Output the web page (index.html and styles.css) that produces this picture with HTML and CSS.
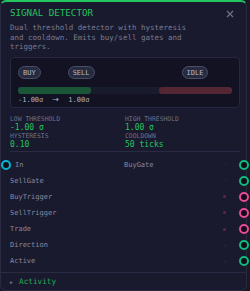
FILE: index.html
```html
<!DOCTYPE html>
<html>
<head>
<meta charset="utf-8">
<link rel="stylesheet" href="styles.css">
</head>
<body>
<div class="node">
  <div class="header">
    <div class="title-row">
      <span class="title">SIGNAL DETECTOR</span>
      <svg class="close" width="8" height="8" viewBox="0 0 8 8"><path d="M1 1 L7 7 M7 1 L1 7" stroke="#6b7088" stroke-width="1.3" fill="none"/></svg>
    </div>
    <div class="desc">Dual threshold detector with hysteresis and cooldown. Emits buy/sell gates and triggers.</div>
  </div>
  <div class="panel">
    <div class="pills">
      <span class="pill pill-buy">BUY</span>
      <span class="pill pill-sell">SELL</span>
      <span class="pill pill-idle">IDLE</span>
    </div>
    <div class="bar">
      <span class="seg seg-buy"></span>
      <span class="seg seg-sell"></span>
    </div>
    <div class="range">
      <span class="r-low">-1.00σ</span>
      <span class="r-arrow">→</span>
      <span class="r-high">1.00σ</span>
    </div>
  </div>
  <div class="stats">
    <div class="stat">
      <div class="s-label">LOW THRESHOLD</div>
      <div class="s-value">-1.00 σ</div>
    </div>
    <div class="stat">
      <div class="s-label">HIGH THRESHOLD</div>
      <div class="s-value">1.00 σ</div>
    </div>
    <div class="stat">
      <div class="s-label">HYSTERESIS</div>
      <div class="s-value">0.10</div>
    </div>
    <div class="stat">
      <div class="s-label">COOLDOWN</div>
      <div class="s-value">50 ticks</div>
    </div>
  </div>
  <div class="ports">
    <div class="port">
      <div class="in-cell"><span class="handle h-in"></span><span class="p-label">In</span></div>
      <span class="p-label">BuyGate</span>
      <span class="ind ind-gate"></span>
      <span class="handle h-gate"></span>
    </div>
    <div class="port">
      <span class="p-label pad">SellGate</span>
      <span class="ind ind-gate"></span>
      <span class="handle h-gate"></span>
    </div>
    <div class="port">
      <span class="p-label pad">BuyTrigger</span>
      <span class="ind ind-trig"></span>
      <span class="handle h-trig"></span>
    </div>
    <div class="port">
      <span class="p-label pad">SellTrigger</span>
      <span class="ind ind-trig"></span>
      <span class="handle h-trig"></span>
    </div>
    <div class="port">
      <span class="p-label pad">Trade</span>
      <span class="ind ind-trig"></span>
      <span class="handle h-trig"></span>
    </div>
    <div class="port">
      <span class="p-label pad">Direction</span>
      <span class="ind ind-gate"></span>
      <span class="handle h-gate"></span>
    </div>
    <div class="port">
      <span class="p-label pad">Active</span>
      <span class="ind ind-gate"></span>
      <span class="handle h-gate"></span>
    </div>
  </div>
  <div class="footer">
    <span class="tri">▶</span>
    <span class="activity">Activity</span>
  </div>
</div>
</body>
</html>
```
FILE: styles.css
```css
* { box-sizing: border-box; }
html, body {
  margin: 0;
  padding: 0;
  background: #181828;
  font-family: "DejaVu Sans Mono", "Liberation Mono", monospace;
}
.node {
  width: 247px;
  height: 291px;
  background: #1a1a2e;
  border: 1px solid #2a2b42;
  border-top: 2px solid #22c55e;
  border-radius: 6px;
  overflow: visible;
}
.header {
  padding: 5px 9px 0 9px;
}
.title-row {
  display: flex;
  justify-content: space-between;
  align-items: center;
  height: 12px;
}
.title {
  color: #22c55e;
  font-size: 9.2px;
  line-height: 12px;
}
.close {
  margin-right: 3px;
  margin-top: 1px;
}
.desc {
  margin-top: 4px;
  color: #767b92;
  font-size: 7.5px;
  line-height: 9.7px;
  width: 182px;
}
.panel {
  margin: 5px 6px 0 9px;
  background: #121222;
  border: 1px solid #262840;
  border-radius: 4px;
  padding: 8px 7px 3px 7px;
}
.pills {
  display: flex;
  height: 13px;
}
.pill {
  display: flex;
  align-items: center;
  height: 13px;
  padding: 0 4px;
  border: 1px solid #4a4f68;
  background: #272b40;
  border-radius: 7px;
  color: #b4b8c8;
  font-size: 7px;
}
.pill-sell { margin-left: 27px; }
.pill-idle { margin-left: 87px; }
.bar {
  margin-top: 8px;
  height: 7px;
  border-radius: 3px;
  background: #181b2b;
  display: flex;
  justify-content: space-between;
}
.seg {
  width: 73px;
  height: 7px;
  border-radius: 3px;
}
.seg-buy { background: #1b5538; }
.seg-sell { background: #542532; }
.range {
  margin-top: 2px;
  display: flex;
  height: 8px;
  align-items: center;
  color: #b0b4c4;
  font-size: 7px;
  line-height: 8px;
}
.r-arrow {
  margin-left: 9px;
  width: 8px;
  font-family: "DejaVu Sans", sans-serif;
  font-size: 8px;
}
.r-high { margin-left: 8px; }
.stats {
  margin: 7.5px 6px 0 9px;
  display: grid;
  grid-template-columns: 115px 1fr;
  border-bottom: 1px solid #2a2b42;
  padding-bottom: 1px;
}
.s-label {
  color: #6b7088;
  font-size: 6.4px;
  line-height: 7px;
}
.s-value {
  color: #22c55e;
  font-size: 8px;
  line-height: 10px;
}
.ports {
  padding-top: 5px;
  padding-bottom: 3px;
}
.port {
  display: flex;
  align-items: center;
  height: 16.1px;
}
.in-cell {
  display: flex;
  align-items: center;
  width: 123px;
}
.p-label {
  color: #858aa0;
  font-size: 7px;
}
.pad { padding-left: 9px; }
.h-in + .p-label { margin-left: 4px; }
.handle {
  width: 10px;
  height: 10px;
  border-radius: 50%;
  border: 2px solid;
  background: #0e0e16;
  flex: none;
}
.h-in { border-color: #06b6d4; }
.h-gate { border-color: #10b981; margin-right: -3px; }
.h-trig { border-color: #ec4899; margin-right: -3px; }
.ind {
  margin-left: auto;
  margin-right: 12px;
  flex: none;
}
.ind-trig {
  width: 3px;
  height: 3px;
  border-radius: 50%;
  background: #5a2a4c;
  margin-right: 13px;
}
.ind-gate {
  width: 4px;
  height: 1px;
  background: #23263a;
}
.footer {
  border-top: 1px solid #2a2b42;
  display: flex;
  align-items: center;
  height: 18px;
  padding-left: 9px;
}
.tri {
  color: #6b7088;
  font-size: 5px;
  width: 9px;
}
.activity {
  color: #1fae55;
  font-size: 7.7px;
}
```
